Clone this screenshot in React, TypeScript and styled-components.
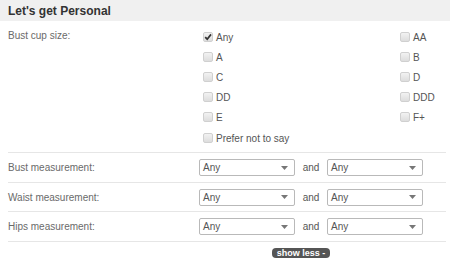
import styled, { createGlobalStyle } from "styled-components";

const GlobalStyle = createGlobalStyle`
  html, body {
    margin: 0;
    padding: 0;
    background: #fff;
  }
  body {
    font-family: "Liberation Sans", Arial, sans-serif;
  }
`;

const Panel = styled.div`
  width: 450px;
  height: 258px;
  overflow: hidden;
`;

const Header = styled.div`
  height: 21px;
  background: #f0f0f0;
  padding: 0 8px;
  display: flex;
  align-items: center;
  font-size: 12px;
  font-weight: 700;
  color: #333;
`;

const Body = styled.div`
  padding: 0 0 0 8px;
  margin-right: 4px;
`;

const Row = styled.div<{ $tall?: boolean }>`
  display: flex;
  align-items: ${(p) => (p.$tall ? "flex-start" : "center")};
  border-bottom: 1px solid #e6e6e6;
  height: ${(p) => (p.$tall ? "132px" : "29.5px")};
  padding-top: ${(p) => (p.$tall ? "6px" : "1px")};
  box-sizing: border-box;
`;

const Label = styled.div<{ $tall?: boolean }>`
  width: 191px;
  font-size: 10px;
  color: #6a6a6a;
  margin-top: ${(p) => (p.$tall ? "3px" : "0")};
`;

const CupGrid = styled.div`
  display: grid;
  grid-template-columns: 197px 1fr;
  grid-auto-rows: 20px;
`;

const Option = styled.label<{ $span?: boolean }>`
  display: flex;
  align-items: center;
  gap: 3px;
  padding-left: 4px;
  font-size: 10px;
  color: #555;
  grid-column: ${(p) => (p.$span ? "1 / span 2" : "auto")};
  margin-top: ${(p) => (p.$span ? "2px" : "0")};
`;

const Box = styled.span`
  width: 10px;
  height: 10px;
  box-sizing: border-box;
  border: 1px solid #d0d0d0;
  border-radius: 2px;
  background: linear-gradient(#f2f2f2, #dddddd);
  display: flex;
  align-items: center;
  justify-content: center;
`;

const Selects = styled.div`
  display: flex;
  align-items: center;
`;

const Select = styled.div`
  width: 96px;
  height: 17px;
  box-sizing: border-box;
  border: 1px solid #b9b9b9;
  border-radius: 2px;
  background: #fff;
  display: flex;
  align-items: center;
  justify-content: space-between;
  padding: 0 6px 0 3px;
  font-size: 10px;
  color: #555;
`;

const And = styled.span`
  font-size: 10px;
  color: #555;
  width: 32px;
  text-align: center;
`;

const Footer = styled.div`
  display: flex;
  justify-content: center;
  padding-left: 152px;
  margin-top: 6px;
`;

const ShowLess = styled.button`
  border: none;
  background: #555;
  color: #fff;
  font-family: "Liberation Sans", Arial, sans-serif;
  font-weight: 700;
  font-size: 9px;
  height: 10px;
  line-height: 10px;
  padding: 0 5px;
  border-radius: 4px;
`;

const cups = ["Any", "AA", "A", "B", "C", "D", "DD", "DDD", "E", "F+"];

const Check = ({ on }: { on?: boolean }) => (
  <Box>
    {on && (
      <svg width="8" height="8" viewBox="0 0 8 8">
        <path d="M1.2 4.2 L3.2 6.2 L7 1.4" stroke="#333" strokeWidth="1.7" fill="none" />
      </svg>
    )}
  </Box>
);

const Arrow = () => (
  <svg width="7" height="4" viewBox="0 0 7 4">
    <path d="M0 0 H7 L3.5 4 Z" fill="#777" />
  </svg>
);

const Measure = ({ label }: { label: string }) => (
  <Row>
    <Label>{label}</Label>
    <Selects>
      <Select>
        Any
        <Arrow />
      </Select>
      <And>and</And>
      <Select>
        Any
        <Arrow />
      </Select>
    </Selects>
  </Row>
);

export default function App() {
  return (
    <>
      <GlobalStyle />
      <Panel>
        <Header>Let's get Personal</Header>
        <Body>
          <Row $tall>
            <Label $tall>Bust cup size:</Label>
            <CupGrid>
              {cups.map((c) => (
                <Option key={c}>
                  <Check on={c === "Any"} />
                  {c}
                </Option>
              ))}
              <Option $span>
                <Check />
                Prefer not to say
              </Option>
            </CupGrid>
          </Row>
          <Measure label="Bust measurement:" />
          <Measure label="Waist measurement:" />
          <Measure label="Hips measurement:" />
        </Body>
        <Footer>
          <ShowLess>show less -</ShowLess>
        </Footer>
      </Panel>
    </>
  );
}
